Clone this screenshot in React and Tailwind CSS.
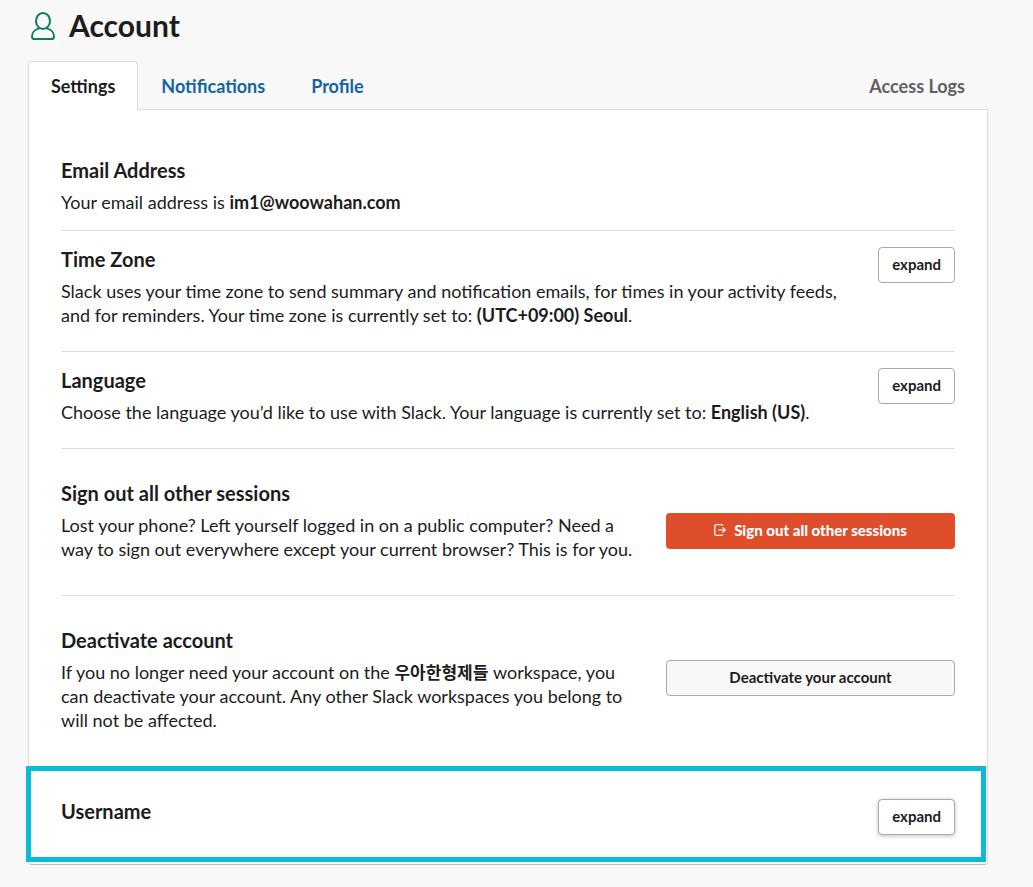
import React from "react";

const outlineButton =
  "h-9 shrink-0 cursor-pointer rounded border border-[#a9a9aa] pb-0.5 text-[15px] leading-5 font-bold text-[#1d1c1d]";

function ExpandButton({ label, raised }) {
  return (
    <button
      type="button"
      aria-label={`expand ${label}`}
      className={`${outlineButton} bg-white px-[13px] ${raised ? "shadow-[0_1px_4px_rgba(0,0,0,0.25)]" : ""}`}
    >
      expand
    </button>
  );
}

function Title({ children }) {
  return <h2 className="text-[20px] leading-6 font-bold">{children}</h2>;
}

function Section({ title, children, action, className }) {
  return (
    <section className={`mx-8 flex items-start justify-between gap-8 ${className}`}>
      <div className="min-w-0 flex-1">
        <Title>{title}</Title>
        <p className="mt-2">{children}</p>
      </div>
      {action}
    </section>
  );
}

function PersonIcon() {
  return (
    <svg viewBox="0 0 26 30" className="h-[30px] w-[26px]" fill="none" stroke="#0b7f5c" strokeWidth="2" strokeLinecap="round" strokeLinejoin="round" aria-hidden="true">
      <ellipse cx="13" cy="9.900" rx="7" ry="8" />
      <path d="M9.300 17.400C5 18.400 2 21.700 2 25.400C2 27.200 2.900 28 4.700 28H21.300C23.100 28 24 27.200 24 25.400C24 21.700 21 18.400 16.700 17.400" />
    </svg>
  );
}

function SignOutIcon() {
  return (
    <svg viewBox="0 0 12 12" className="h-3 w-3" fill="none" stroke="currentColor" strokeWidth="1.200" strokeLinecap="round" strokeLinejoin="round" aria-hidden="true">
      <path d="M8.600 1.400Q8.400 .7 7.600 .7H2Q.8 .7 .8 1.900V10.100Q.8 11.300 2 11.300H7.600Q8.400 11.300 8.600 10.600" />
      <path d="M4.500 6H11M8.900 3.800L11.200 6L8.900 8.200" />
    </svg>
  );
}

export default function App() {
  return (
    <div className="min-h-screen bg-[#f8f8f8] pr-[45px] pb-[22px] pl-7 font-['Lato','Noto_Sans_CJK_KR',sans-serif] text-[18px] leading-6 text-[#1d1c1d]">
      <header className="flex items-center gap-[13px] pt-1.5 pl-0.5">
        <PersonIcon />
        <h1 className="pb-0.5 text-[30px] leading-[38px] font-bold">Account</h1>
      </header>

      <nav aria-label="Account sections" className="mt-[15px] flex font-bold">
        <a href="#settings" aria-current="page" className="relative z-10 -mb-px rounded-t border border-b-0 border-[#ddd] bg-white px-[22px] pt-3 pb-3">
          Settings
        </a>
        <a href="#notifications" className="px-[23px] pt-[13px] pb-2.5 text-[#1264a3]">Notifications</a>
        <a href="#profile" className="px-[23px] pt-[13px] pb-2.5 text-[#1264a3]">Profile</a>
        <a href="#logs" className="ml-auto px-[23px] pt-[13px] pb-2.5 text-[#616061]">Access Logs</a>
      </nav>

      <main className="rounded-b border border-[#ddd] border-b-[#bbb] bg-white pt-8">
        <Section title="Email Address" className="border-b border-[#ddd] pt-4 pb-4">
          Your email address is <b>im1@woowahan.com</b>
        </Section>
        <Section title="Time Zone" className="border-b border-[#ddd] pt-4 pb-6" action={<ExpandButton label="Time Zone" />}>
          Slack uses your time zone to send summary and notification emails, for times in your activity feeds, and for
          reminders. Your time zone is currently set to: <b>(UTC+09:00) Seoul</b>.
        </Section>
        <Section title="Language" className="border-b border-[#ddd] pt-4 pb-6" action={<ExpandButton label="Language" />}>
          Choose the language you’d like to use with Slack. Your language is currently set to: <b>English (US)</b>.
        </Section>
        <Section
          title="Sign out all other sessions"
          className="border-b border-[#ddd] pt-8 pb-[34px]"
          action={
            <button type="button" className="mt-8 flex h-9 w-[289px] shrink-0 cursor-pointer items-center justify-center gap-2 rounded bg-[#de4e2b] pb-0.5 text-[15px] leading-5 font-black text-white">
              <SignOutIcon />
              Sign out all other sessions
            </button>
          }
        >
          Lost your phone? Left yourself logged in on a public computer? Need a way to sign out everywhere except your
          current browser? This is for you.
        </Section>
        <Section
          title="Deactivate account"
          className="pt-8 pb-[34px]"
          action={
            <button type="button" className={`${outlineButton} mt-8 w-[289px] bg-[#f8f8f8]`}>
              Deactivate your account
            </button>
          }
        >
          If you no longer need your account on the <b className="text-[17px] leading-5">우아한형제들</b> workspace, you
          can deactivate your account. Any other Slack workspaces you belong to will not be affected.
        </Section>
        <section className="mr-px mb-0.5 -ml-[3px] flex items-start justify-between border-5 border-[#0bbad3] pt-7 pr-[26px] pb-[22px] pl-[30px]">
          <Title>Username</Title>
          <ExpandButton label="Username" raised />
        </section>
      </main>
    </div>
  );
}
